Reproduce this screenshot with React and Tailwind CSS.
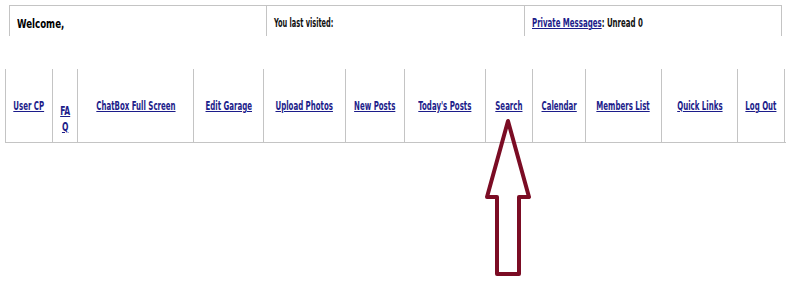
import React from 'react';

const links = [
  { label: 'User CP', w: 'w-[47px]' },
  { label: 'FAQ', w: 'w-[25px]', faq: true },
  { label: 'ChatBox Full Screen', w: 'w-[116px]' },
  { label: 'Edit Garage', w: 'w-[70px]' },
  { label: 'Upload Photos', w: 'w-[82px]' },
  { label: 'New Posts', w: 'w-[59px]' },
  { label: "Today's Posts", w: 'w-[81px]' },
  { label: 'Search', w: 'w-[47px]' },
  { label: 'Calendar', w: 'w-[53px]' },
  { label: 'Members List', w: 'w-[76px]' },
  { label: 'Quick Links', w: 'w-[76px]' },
  { label: 'Log Out', w: 'w-[48px]', last: true },
];

// the forum font is very narrow; squeeze DejaVu Condensed to match
const font = { fontFamily: '"DejaVu Sans Condensed", "Liberation Sans", sans-serif' };

export default function App() {
  return (
    <div className="relative w-[793px] h-[289px] bg-white overflow-hidden text-[12px] font-bold" style={font}>
      {/* Welcome bar */}
      <div className="mt-[5px] ml-[9px] w-[773px] h-[31px] border-t border-l border-r border-[#c4c4c4] flex">
        <div className="w-[257px] border-r border-[#c4c4c4] pl-[7px] pt-[8px] text-black text-[13px]">
          <span className="inline-block origin-left scale-x-[0.74] whitespace-nowrap">Welcome,</span>
        </div>
        <div className="w-[258px] border-r border-[#c4c4c4] pl-[7px] pt-[8px] text-[#111]">
          <span className="inline-block origin-left scale-x-[0.61] whitespace-nowrap">You last visited:</span>
        </div>
        <div className="flex-1 pl-[7px] pt-[8px] text-[#111]">
          <span className="inline-block origin-left scale-x-[0.65] whitespace-nowrap">
            <a href="#" className="text-[#1c1c8a] underline">Private Messages</a>: Unread 0
          </span>
        </div>
      </div>

      {/* Nav table */}
      <div className="mt-[33px] ml-[5px] w-[781px] h-[74px] flex border-b border-[#c4c4c4]">
        {links.map((l) => (
          <div
            key={l.label}
            className={`${l.w} shrink-0 border-l border-[#c4c4c4] ${l.last ? 'border-r' : ''} flex justify-center ${l.faq ? 'pt-[34px]' : 'pt-[30px]'}`}
          >
            {l.faq ? (
              <a href="#" className="text-[#1c1c8a] underline leading-[16px] text-center inline-block scale-x-[0.7]">FA<br />Q</a>
            ) : (
              <a href="#" className="text-[#1c1c8a] underline whitespace-nowrap leading-[15px] inline-block shrink-0 scale-x-[0.65]">{l.label}</a>
            )}
          </div>
        ))}
      </div>

      {/* Arrow pointing at Search */}
      <svg className="absolute left-0 top-0" width="793" height="289" viewBox="0 0 793 289">
        <polygon
          points="508,121 529,197 519,197 519,274 497,274 497,197 487,197"
          fill="none"
          stroke="#7b0c24"
          strokeWidth="4"
          strokeLinejoin="round"
        />
      </svg>
    </div>
  );
}
